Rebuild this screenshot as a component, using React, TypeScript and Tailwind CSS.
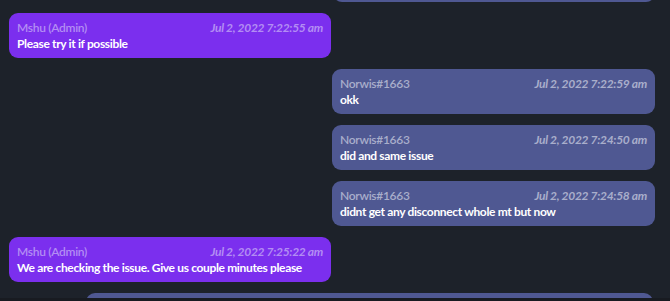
import React from "react";

type Msg = { name: string; date: string; text: string; admin: boolean };

const msgs: Msg[] = [
  { name: "Mshu (Admin)", date: "Jul 2, 2022 7:22:55 am", text: "Please try it if possible", admin: true },
  { name: "Norwis#1663", date: "Jul 2, 2022 7:22:59 am", text: "okk", admin: false },
  { name: "Norwis#1663", date: "Jul 2, 2022 7:24:50 am", text: "did and same issue", admin: false },
  { name: "Norwis#1663", date: "Jul 2, 2022 7:24:58 am", text: "didnt get any disconnect whole mt but now", admin: false },
  { name: "Mshu (Admin)", date: "Jul 2, 2022 7:25:22 am", text: "We are checking the issue. Give us couple minutes please", admin: true },
];

function Bubble({ m }: { m: Msg }) {
  return (
    <div
      className={
        m.admin
          ? "self-start w-[322px] h-[45px] rounded-[9px] bg-[#7b2fee] px-[8px] pt-[6px]"
          : "self-end w-[323px] h-[45px] rounded-[9px] bg-[#4f5892] px-[8px] pt-[6px]"
      }
    >
      <div className="flex justify-between items-center h-[17px] text-[12px] font-semibold leading-[17px] tracking-[-0.3px]">
        <span className={m.admin ? "text-[#b38df3]" : "text-[#a9aecb]"}>{m.name}</span>
        <span className={m.admin ? "italic font-bold text-[#b38df3]" : "italic font-bold text-[#a9aecb]"}>{m.date}</span>
      </div>
      <div className="text-[12px] font-bold leading-[16px] text-white tracking-[-0.35px]">{m.text}</div>
    </div>
  );
}

export default function App() {
  return (
    <div
      className="w-[670px] h-[301px] bg-[#1d222a] overflow-hidden flex flex-col"
      style={{ fontFamily: "Lato, 'Liberation Sans', sans-serif" }}
    >
      <div className="flex-1 overflow-hidden pl-[9px] pr-[15px]">
        <div className="flex flex-col gap-[11px] mt-[-43px]">
          <div className="self-end w-[322px] h-[45px] rounded-[9px] bg-[#4f5892]" />
          {msgs.map((m, i) => (
            <Bubble key={i} m={m} />
          ))}
          <div className="self-end w-[567px] h-[45px] rounded-[9px] bg-[#4f5892] mr-[2px]" />
        </div>
      </div>
      <div className="h-[3px] bg-[#181b21] shrink-0" />
    </div>
  );
}
